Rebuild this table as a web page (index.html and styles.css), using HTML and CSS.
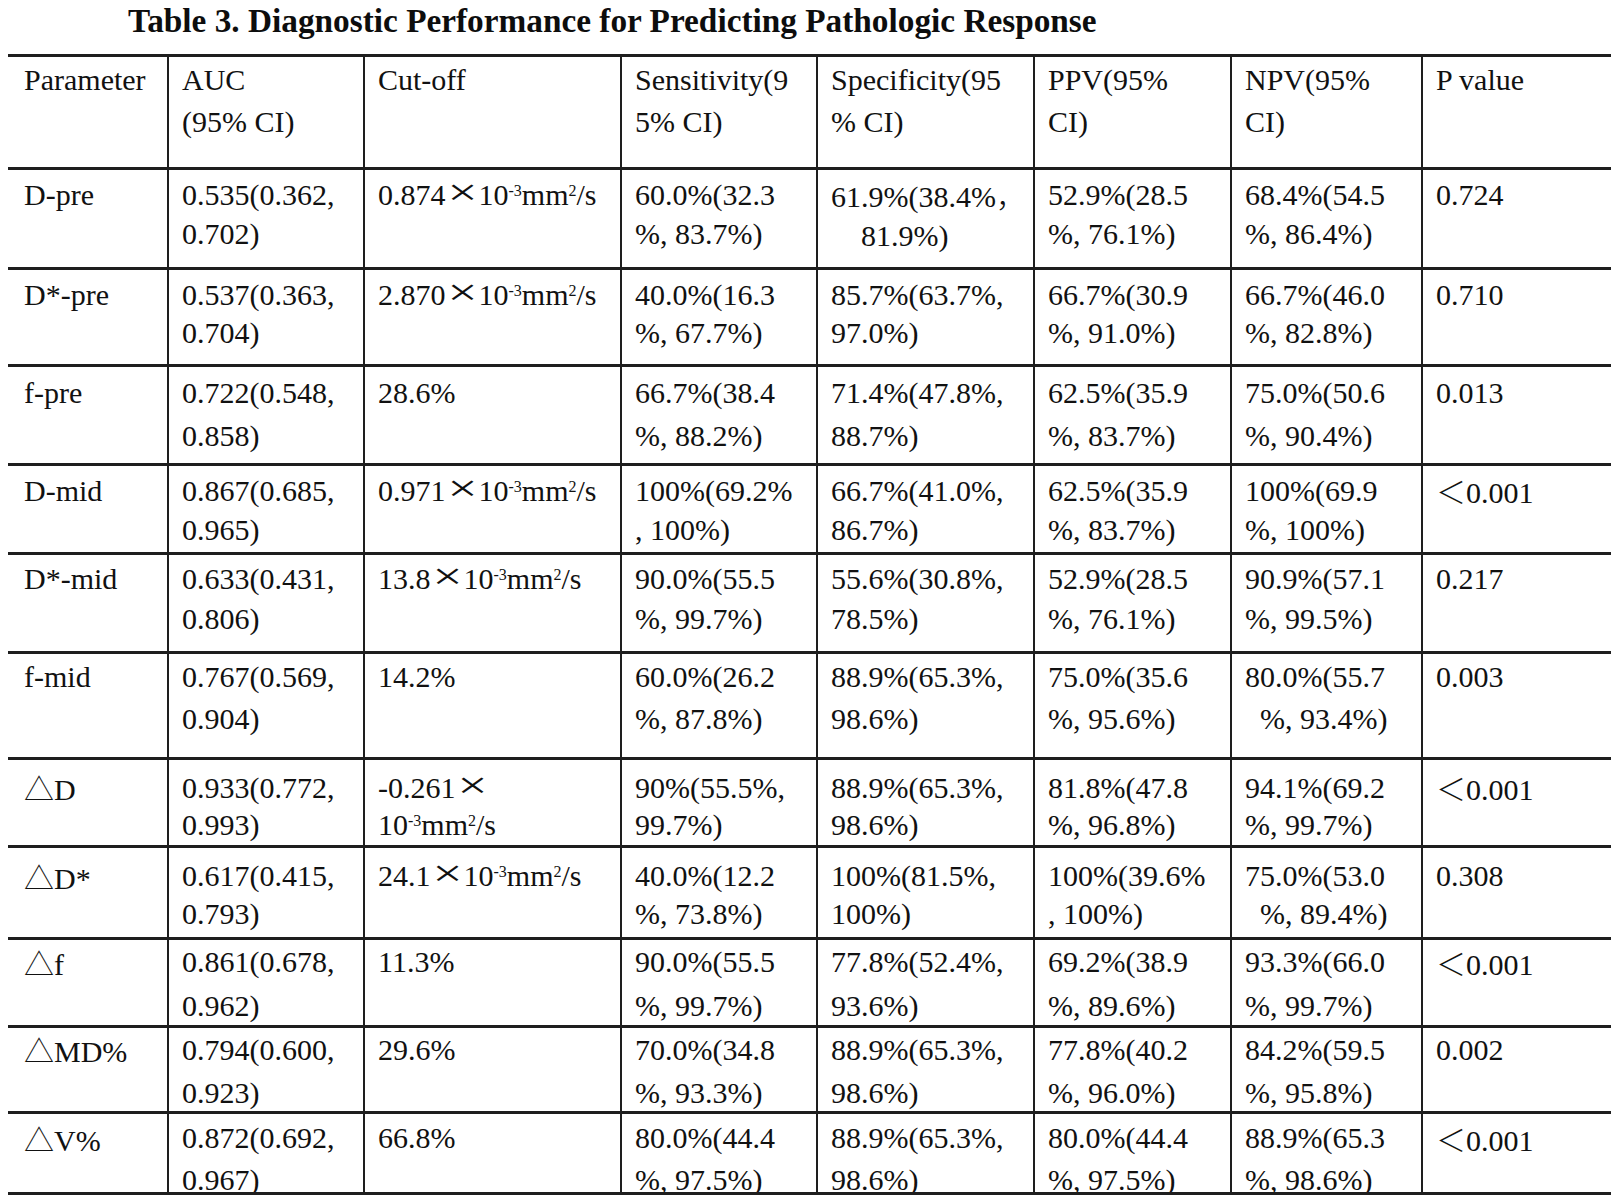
FILE: index.html
```html
<!DOCTYPE html>
<html lang="en">
<head>
<meta charset="utf-8">
<title>Table 3. Diagnostic Performance for Predicting Pathologic Response</title>
<link rel="stylesheet" href="styles.css">
</head>
<body>
<div class="page">
  <h1 class="title">Table 3. Diagnostic Performance for Predicting Pathologic Response</h1>
  <div class="table">
    <div class="row r0">
      <div class="cell">Parameter</div>
      <div class="cell">AUC<br>(95% CI)</div>
      <div class="cell">Cut-off</div>
      <div class="cell">Sensitivity(9<br>5% CI)</div>
      <div class="cell">Specificity(95<br>% CI)</div>
      <div class="cell">PPV(95%<br>CI)</div>
      <div class="cell">NPV(95%<br>CI)</div>
      <div class="cell">P value</div>
    </div>
    <div class="row r1">
      <div class="cell">D-pre</div>
      <div class="cell">0.535(0.362,<br>0.702)</div>
      <div class="cell">0.874<span class="x">×</span>10<span class="sp">-3</span>mm<span class="sp">2</span>/s</div>
      <div class="cell">60.0%(32.3<br>%, 83.7%)</div>
      <div class="cell">61.9%(38.4%<span class="cjk">，</span><br><span class="in1">81.9%)</span></div>
      <div class="cell">52.9%(28.5<br>%, 76.1%)</div>
      <div class="cell">68.4%(54.5<br>%, 86.4%)</div>
      <div class="cell">0.724</div>
    </div>
    <div class="row r2">
      <div class="cell">D*-pre</div>
      <div class="cell">0.537(0.363,<br>0.704)</div>
      <div class="cell">2.870<span class="x">×</span>10<span class="sp">-3</span>mm<span class="sp">2</span>/s</div>
      <div class="cell">40.0%(16.3<br>%, 67.7%)</div>
      <div class="cell">85.7%(63.7%,<br>97.0%)</div>
      <div class="cell">66.7%(30.9<br>%, 91.0%)</div>
      <div class="cell">66.7%(46.0<br>%, 82.8%)</div>
      <div class="cell">0.710</div>
    </div>
    <div class="row r3">
      <div class="cell">f-pre</div>
      <div class="cell">0.722(0.548,<br>0.858)</div>
      <div class="cell">28.6%</div>
      <div class="cell">66.7%(38.4<br>%, 88.2%)</div>
      <div class="cell">71.4%(47.8%,<br>88.7%)</div>
      <div class="cell">62.5%(35.9<br>%, 83.7%)</div>
      <div class="cell">75.0%(50.6<br>%, 90.4%)</div>
      <div class="cell">0.013</div>
    </div>
    <div class="row r4">
      <div class="cell">D-mid</div>
      <div class="cell">0.867(0.685,<br>0.965)</div>
      <div class="cell">0.971<span class="x">×</span>10<span class="sp">-3</span>mm<span class="sp">2</span>/s</div>
      <div class="cell">100%(69.2%<br>, 100%)</div>
      <div class="cell">66.7%(41.0%,<br>86.7%)</div>
      <div class="cell">62.5%(35.9<br>%, 83.7%)</div>
      <div class="cell">100%(69.9<br>%, 100%)</div>
      <div class="cell"><span class="cjk">＜</span>0.001</div>
    </div>
    <div class="row r5">
      <div class="cell">D*-mid</div>
      <div class="cell">0.633(0.431,<br>0.806)</div>
      <div class="cell">13.8<span class="x">×</span>10<span class="sp">-3</span>mm<span class="sp">2</span>/s</div>
      <div class="cell">90.0%(55.5<br>%, 99.7%)</div>
      <div class="cell">55.6%(30.8%,<br>78.5%)</div>
      <div class="cell">52.9%(28.5<br>%, 76.1%)</div>
      <div class="cell">90.9%(57.1<br>%, 99.5%)</div>
      <div class="cell">0.217</div>
    </div>
    <div class="row r6">
      <div class="cell">f-mid</div>
      <div class="cell">0.767(0.569,<br>0.904)</div>
      <div class="cell">14.2%</div>
      <div class="cell">60.0%(26.2<br>%, 87.8%)</div>
      <div class="cell">88.9%(65.3%,<br>98.6%)</div>
      <div class="cell">75.0%(35.6<br>%, 95.6%)</div>
      <div class="cell">80.0%(55.7<br><span class="in2">%, 93.4%)</span></div>
      <div class="cell">0.003</div>
    </div>
    <div class="row r7">
      <div class="cell"><span class="cjk">△</span>D</div>
      <div class="cell">0.933(0.772,<br>0.993)</div>
      <div class="cell">-0.261<span class="x">×</span><br>10<span class="sp">-3</span>mm<span class="sp">2</span>/s</div>
      <div class="cell">90%(55.5%,<br>99.7%)</div>
      <div class="cell">88.9%(65.3%,<br>98.6%)</div>
      <div class="cell">81.8%(47.8<br>%, 96.8%)</div>
      <div class="cell">94.1%(69.2<br>%, 99.7%)</div>
      <div class="cell"><span class="cjk">＜</span>0.001</div>
    </div>
    <div class="row r8">
      <div class="cell"><span class="cjk">△</span>D*</div>
      <div class="cell">0.617(0.415,<br>0.793)</div>
      <div class="cell">24.1<span class="x">×</span>10<span class="sp">-3</span>mm<span class="sp">2</span>/s</div>
      <div class="cell">40.0%(12.2<br>%, 73.8%)</div>
      <div class="cell">100%(81.5%,<br>100%)</div>
      <div class="cell">100%(39.6%<br>, 100%)</div>
      <div class="cell">75.0%(53.0<br><span class="in2">%, 89.4%)</span></div>
      <div class="cell">0.308</div>
    </div>
    <div class="row r9">
      <div class="cell"><span class="cjk">△</span>f</div>
      <div class="cell">0.861(0.678,<br>0.962)</div>
      <div class="cell">11.3%</div>
      <div class="cell">90.0%(55.5<br>%, 99.7%)</div>
      <div class="cell">77.8%(52.4%,<br>93.6%)</div>
      <div class="cell">69.2%(38.9<br>%, 89.6%)</div>
      <div class="cell">93.3%(66.0<br>%, 99.7%)</div>
      <div class="cell"><span class="cjk">＜</span>0.001</div>
    </div>
    <div class="row r10">
      <div class="cell"><span class="cjk">△</span>MD%</div>
      <div class="cell">0.794(0.600,<br>0.923)</div>
      <div class="cell">29.6%</div>
      <div class="cell">70.0%(34.8<br>%, 93.3%)</div>
      <div class="cell">88.9%(65.3%,<br>98.6%)</div>
      <div class="cell">77.8%(40.2<br>%, 96.0%)</div>
      <div class="cell">84.2%(59.5<br>%, 95.8%)</div>
      <div class="cell">0.002</div>
    </div>
    <div class="row r11">
      <div class="cell"><span class="cjk">△</span>V%</div>
      <div class="cell">0.872(0.692,<br>0.967)</div>
      <div class="cell">66.8%</div>
      <div class="cell">80.0%(44.4<br>%, 97.5%)</div>
      <div class="cell">88.9%(65.3%,<br>98.6%)</div>
      <div class="cell">80.0%(44.4<br>%, 97.5%)</div>
      <div class="cell">88.9%(65.3<br>%, 98.6%)</div>
      <div class="cell"><span class="cjk">＜</span>0.001</div>
    </div>
  </div>
</div>
</body>
</html>
```

FILE: styles.css
```css
* {
  box-sizing: border-box;
}

html,
body {
  margin: 0;
  padding: 0;
  background: #ffffff;
}

body {
  font-family: "Liberation Serif", "Noto Sans CJK SC", serif;
  color: #111111;
}

.page {
  width: 1618px;
  padding-left: 8px;
}

.title {
  height: 54px;
  margin: 0;
  padding: 1px 0 0 120px;
  font-size: 33.3px;
  line-height: 40px;
  font-weight: bold;
  color: #0d0d0d;
  white-space: nowrap;
}

.table {
  display: grid;
  width: 1603px;
  grid-template-columns: 159px 194px 255px 194px 215px 195px 189px 188px;
  grid-template-rows: 110px 97px 94px 96px 86px 96px 103px 85px 89px 85px 83px 78px;
  row-gap: 3px;
  column-gap: 2px;
  padding: 3px 0;
  background: #1e1e1e;
}

.row {
  display: contents;
  --lh: 41px;
  --pt: 4px;
}

.cell {
  background: #ffffff;
  overflow: hidden;
  white-space: nowrap;
  font-size: 30px;
  line-height: var(--lh);
  padding: var(--pt) 0 0 13px;
}

.row .cell:first-child {
  padding-left: 16px;
}

.r0 { --lh: 42px; --pt: 2px; }
.r1 { --lh: 39px; --pt: 5px; }
.r2 { --lh: 38px; --pt: 6px; }
.r3 { --lh: 43px; --pt: 4px; }
.r4 { --lh: 39px; --pt: 5px; }
.r5 { --lh: 40px; --pt: 4px; }
.r6 { --lh: 42px; --pt: 2px; }
.r7 { --lh: 37px; --pt: 9px; }
.r8 { --lh: 38px; --pt: 9px; }
.r9 { --lh: 44px; --pt: 0px; }
.r10 { --lh: 43px; --pt: 0px; }
.r11 { --lh: 42px; --pt: 3px; }

.sp {
  font-size: 16px;
  line-height: 0;
  vertical-align: 9px;
}

.x {
  display: inline-block;
  width: 33px;
  text-align: center;
  font-size: 38px;
  line-height: 44px;
  margin: -8px 0 -6px;
  vertical-align: 0;
  transform: scaleX(1.4);
}

.cjk {
  font-family: "Noto Sans CJK SC", sans-serif;
  font-weight: 300;
}

.in1 {
  padding-left: 30px;
}

.in2 {
  padding-left: 15px;
}
```
